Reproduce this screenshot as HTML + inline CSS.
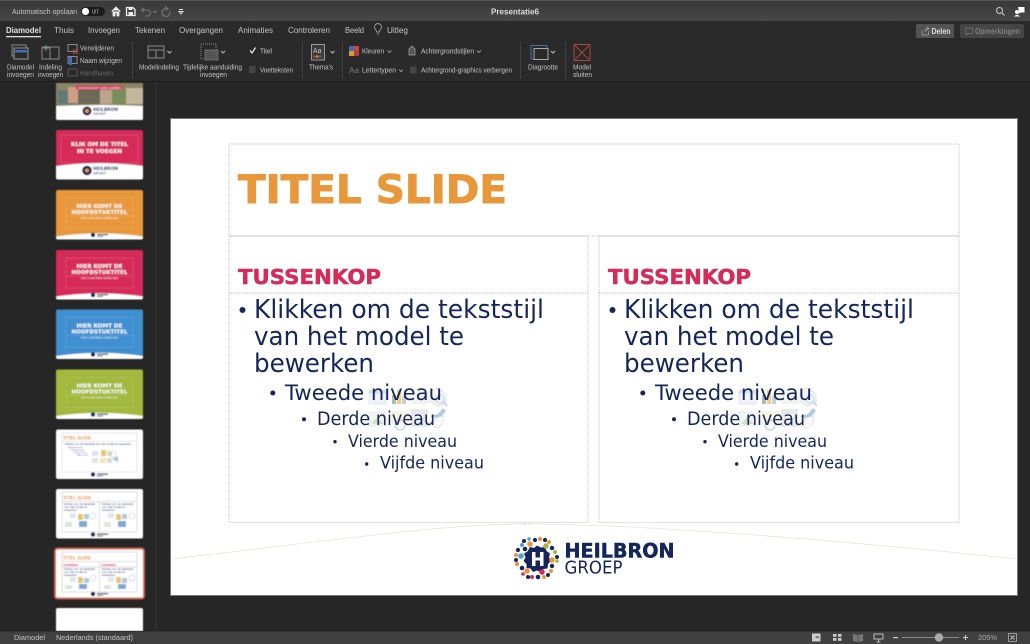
<!DOCTYPE html>
<html lang="nl"><head><meta charset="utf-8"><title>Presentatie6</title>
<style>
html,body{margin:0;padding:0;width:1030px;height:644px;overflow:hidden;background:#262626}
svg{display:block}
.u{font-family:"Liberation Sans",sans-serif;font-size:7px;fill:#c4c4c4}
.s{font-family:"DejaVu Sans",sans-serif}
.b{fill:#12275c;font-family:"DejaVu Sans",sans-serif}
.w{font-family:"DejaVu Sans",sans-serif;font-weight:bold;fill:#fff}
.ph{fill:none;stroke:#b4b4b4;stroke-width:.8;stroke-dasharray:1 1}
.tp{fill:none;stroke:#fff;stroke-opacity:.3;stroke-width:.4}
.ic{fill:none;stroke:#8a8a8a;stroke-width:1}
.bu{filter:url(#bl)}
.bt{filter:url(#bt)}
</style></head><body>
<svg width="1030" height="644" viewBox="0 0 1030 644" xmlns="http://www.w3.org/2000/svg">
<defs>
<linearGradient id="tb" x1="0" y1="0" x2="0" y2="1"><stop offset="0" stop-color="#393939"/><stop offset="1" stop-color="#474747"/></linearGradient>
<filter id="bl" x="-5%" y="-5%" width="110%" height="110%"><feGaussianBlur stdDeviation=".35"/></filter>
<filter id="bt" x="-5%" y="-5%" width="110%" height="110%"><feGaussianBlur stdDeviation=".55"/></filter>
</defs>
<rect width="1030" height="644" fill="#262626"/>

<g class="bu">
<!-- title bar -->
<rect width="1030" height="21" fill="url(#tb)"/>
<rect width="1030" height="1" fill="#555"/>
<text class="u" x="12" y="14" textLength="65" lengthAdjust="spacingAndGlyphs">Automatisch opslaan</text>
<rect x="81" y="7" width="24" height="9" rx="4.500" fill="#1d1d1d"/><circle cx="85.500" cy="11.500" r="3.600" fill="#fff"/>
<text class="u" x="92" y="13.600" style="font-size:5px" textLength="7" lengthAdjust="spacingAndGlyphs">UIT</text>
<path d="M111.500 11.500L116 7L120.500 11.500M113 10.500V16H115V12.800H117V16H119V10.500" fill="#eee" stroke="#eee" stroke-width=".8"/>
<path d="M126.500 7.500H133L135 9.500V15.500H126.500Z" fill="none" stroke="#eee" stroke-width="1.300"/><rect x="128.500" y="7.500" width="4" height="2.500" fill="#eee"/><rect x="128.500" y="12" width="4.500" height="3.500" fill="#eee"/>
<path d="M142 10H147.500A3 3 0 0 1 147.500 16H145M144 8L141.500 10L144 12" fill="none" stroke="#777" stroke-width="1"/>
<path d="M153.500 11L155 12.500L156.500 11" fill="none" stroke="#777"/>
<path d="M167 8.500A4 4 0 1 0 170 11.500M165 6.500L168 8.500L165.500 10.500" fill="none" stroke="#777"/>
<path d="M179 9.500H183M179 11.500L181 14L183 11.500Z" fill="none" stroke="#ddd"/>
<text class="u" x="491" y="14.500" style="font-size:8px;font-weight:bold;fill:#ddd" textLength="48" lengthAdjust="spacingAndGlyphs">Presentatie6</text>
<circle cx="999.500" cy="10.500" r="3" fill="none" stroke="#ccc"/><path d="M1002 13L1004.500 15.500" stroke="#ccc" stroke-width="1.100"/>
<path d="M1018 7H1024.500V12.500H1021L1019.500 13.500Z" fill="#fff"/><circle cx="1017" cy="12" r="2" fill="#fff"/><path d="M1014 16.500Q1017 13 1020 16.500Z" fill="#fff"/>

<!-- ribbon -->
<rect y="21" width="1030" height="60" fill="#2b2b2b"/>
<rect y="81" width="1030" height="1" fill="#1b1b1b"/>
<rect x="6" y="36" width="35" height="1.300" fill="#ddd"/>
<text class="u" x="6" y="33" style="font-size:8px;fill:#e0e0e0;font-weight:bold" textLength="35" lengthAdjust="spacingAndGlyphs">Diamodel</text>
<text class="u" x="54" y="33" style="font-size:8px" textLength="20" lengthAdjust="spacingAndGlyphs">Thuis</text>
<text class="u" x="88" y="33" style="font-size:8px" textLength="32" lengthAdjust="spacingAndGlyphs">Invoegen</text>
<text class="u" x="135" y="33" style="font-size:8px" textLength="30" lengthAdjust="spacingAndGlyphs">Tekenen</text>
<text class="u" x="179" y="33" style="font-size:8px" textLength="44" lengthAdjust="spacingAndGlyphs">Overgangen</text>
<text class="u" x="238" y="33" style="font-size:8px" textLength="35" lengthAdjust="spacingAndGlyphs">Animaties</text>
<text class="u" x="288" y="33" style="font-size:8px" textLength="42" lengthAdjust="spacingAndGlyphs">Controleren</text>
<text class="u" x="345" y="33" style="font-size:8px" textLength="19" lengthAdjust="spacingAndGlyphs">Beeld</text>
<text class="u" x="387" y="33" style="font-size:8px" textLength="21" lengthAdjust="spacingAndGlyphs">Uitleg</text>
<path d="M376.500 32Q376.500 30.500 375.500 29.500A3.500 3.500 0 1 1 380.500 29.500Q379.500 30.500 379.500 32ZM376.800 34H379.200" fill="none" stroke="#aaa" stroke-width=".8"/>

<!-- ribbon icons -->
<rect x="12" y="45" width="14" height="11" class="ic"/><rect x="14" y="48" width="14" height="11" fill="#2b2b2b" stroke="#999"/><rect x="15" y="50" width="12" height="2.500" fill="#3f6fb8"/>
<rect x="42" y="47" width="17" height="12" class="ic"/><path d="M50 47V59" class="ic"/><path d="M46 45V51M43 48H49" stroke="#6fae7d" fill="none"/>
<rect x="68" y="44.500" width="9" height="7" class="ic"/><path d="M73 49L78 54M78 49L73 54" stroke="#c44" fill="none"/>
<rect x="68" y="56.500" width="9" height="7" class="ic"/><rect x="69" y="57" width="3" height="8" fill="#3f6fb8"/>
<rect x="68" y="69" width="9" height="7" fill="none" stroke="#555"/>
<text class="u" x="80" y="50.300" textLength="34" lengthAdjust="spacingAndGlyphs">Verwijderen</text>
<text class="u" x="80" y="63" textLength="42" lengthAdjust="spacingAndGlyphs">Naam wijzigen</text>
<text class="u" x="80" y="75.500" style="fill:#666" textLength="33" lengthAdjust="spacingAndGlyphs">Handhaven</text>
<text class="u" x="7" y="69.500" textLength="27" lengthAdjust="spacingAndGlyphs">Diamodel</text>
<text class="u" x="7" y="77" textLength="27" lengthAdjust="spacingAndGlyphs">invoegen</text>
<text class="u" x="39" y="69.500" textLength="23" lengthAdjust="spacingAndGlyphs">Indeling</text>
<text class="u" x="38" y="77" textLength="25" lengthAdjust="spacingAndGlyphs">invoegen</text>
<rect x="132" y="42" width=".8" height="37" fill="#444"/>
<rect x="148" y="46" width="16" height="12" class="ic" stroke-width="1.200"/><path d="M148 50H164M156 50V58" class="ic"/>
<path d="M167.500 51L169.500 53L171.500 51" fill="none" stroke="#bbb"/>
<text class="u" x="139" y="69.500" textLength="40" lengthAdjust="spacingAndGlyphs">Modelindeling</text>
<rect x="201" y="44" width="15" height="15" fill="none" stroke="#888" stroke-dasharray="1 1"/><rect x="205" y="50" width="13" height="10" fill="#555" stroke="#888" stroke-width=".6"/>
<path d="M221 51L223 53L225 51" fill="none" stroke="#bbb"/>
<text class="u" x="183" y="69.500" textLength="59" lengthAdjust="spacingAndGlyphs">Tijdelijke aanduiding</text>
<text class="u" x="200" y="77" textLength="27" lengthAdjust="spacingAndGlyphs">invoegen</text>
<path d="M250 50.500L252 53L255.500 47.500" fill="none" stroke="#eee" stroke-width="1.200"/>
<text class="u" x="260" y="53.500" textLength="12" lengthAdjust="spacingAndGlyphs">Titel</text>
<rect x="249" y="66" width="6.500" height="7" rx="1" fill="#444"/>
<text class="u" x="260" y="72.500" textLength="33" lengthAdjust="spacingAndGlyphs">Voetteksten</text>
<rect x="302" y="42" width=".8" height="37" fill="#444"/>
<rect x="311.500" y="44.500" width="13" height="15.500" fill="#3a3a3a" stroke="#999"/><text class="u" x="313" y="53">Aa</text><rect x="313" y="55.500" width="2.500" height="2" fill="#d33"/><rect x="316" y="55.500" width="2.500" height="2" fill="#dd9a33"/><rect x="319" y="55.500" width="2.500" height="2" fill="#46a"/>
<path d="M330.500 51L332.500 53L334.500 51" fill="none" stroke="#bbb"/>
<text class="u" x="309" y="69.500" textLength="24" lengthAdjust="spacingAndGlyphs">Thema's</text>
<rect x="342" y="42" width=".8" height="37" fill="#444"/>
<rect x="349" y="46" width="5" height="5" fill="#3f6fb8"/><rect x="354" y="46" width="5" height="5" fill="#c84a38"/><rect x="349" y="51" width="5" height="5" fill="#dd9a33"/><rect x="354" y="51" width="5" height="5" fill="#b23a48"/>
<text class="u" x="362" y="53.500" textLength="22" lengthAdjust="spacingAndGlyphs">Kleuren</text>
<path d="M387.500 50.500L389.500 52.500L391.500 50.500" fill="none" stroke="#aaa" stroke-width=".8"/>
<path d="M409 49L412 46L415 49V55H409Z" fill="#555" stroke="#aaa" stroke-width=".7"/>
<text class="u" x="421" y="53.500" textLength="53" lengthAdjust="spacingAndGlyphs">Achtergrondstijlen</text>
<path d="M477 50.500L479 52.500L481 50.500" fill="none" stroke="#aaa" stroke-width=".8"/>
<text class="u" x="349" y="73" style="font-size:8px;fill:#777" textLength="10" lengthAdjust="spacingAndGlyphs">Aa</text>
<text class="u" x="362" y="72.500" textLength="34" lengthAdjust="spacingAndGlyphs">Lettertypen</text>
<path d="M399 69.500L401 71.500L403 69.500" fill="none" stroke="#aaa" stroke-width=".8"/>
<rect x="410" y="66.500" width="6.500" height="7" rx="1" fill="#444"/>
<text class="u" x="421" y="72.500" textLength="91" lengthAdjust="spacingAndGlyphs">Achtergrond-graphics verbergen</text>
<rect x="520" y="42" width=".8" height="37" fill="#444"/>
<rect x="531" y="45.500" width="16" height="13.500" fill="none" stroke="#4a6fa8"/><rect x="534" y="48.500" width="14" height="11" fill="#2b2b2b" stroke="#aaa"/>
<path d="M551 51L553 53L555 51" fill="none" stroke="#bbb"/>
<text class="u" x="528" y="69.500" textLength="30" lengthAdjust="spacingAndGlyphs">Diagrootte</text>
<rect x="565" y="42" width=".8" height="37" fill="#444"/>
<rect x="574" y="44.500" width="16" height="16" fill="none" stroke="#a8463c"/><path d="M575 45.500L589 59.500M589 45.500L575 59.500" stroke="#a8463c" fill="none"/>
<text class="u" x="573" y="69.500" textLength="18" lengthAdjust="spacingAndGlyphs">Model</text>
<text class="u" x="573" y="77" textLength="19" lengthAdjust="spacingAndGlyphs">sluiten</text>

<!-- share buttons -->
<rect x="916" y="24" width="38" height="14" rx="1.500" fill="#535353"/>
<path d="M922 30.500V35H928.500V31M925 32Q925 28.500 928 28.500M926.500 26.500L929 28.500L926.500 30.500" fill="none" stroke="#aaa" stroke-width=".7"/>
<text class="u" x="931.500" y="34" style="font-weight:bold;fill:#ddd;font-size:8px" textLength="19" lengthAdjust="spacingAndGlyphs">Delen</text>
<rect x="960" y="24" width="64" height="14" rx="1.500" fill="#444"/>
<path d="M965.500 28H972.500V33.500H968L966.500 35V33.500H965.500Z" fill="none" stroke="#777" stroke-width=".7"/>
<text class="u" x="975" y="34" style="font-weight:bold;fill:#808080;font-size:8px" textLength="45" lengthAdjust="spacingAndGlyphs">Opmerkingen</text>
</g>

<!-- workspace -->
<rect x="155.500" y="82" width="1" height="549" fill="#373737"/>

<!-- thumbnails -->
<g class="bt">
<!-- 1 -->
<rect x="56" y="83" width="87" height="37" rx="2" fill="#fff"/>
<rect x="56" y="83" width="87" height="23" fill="#8a8464"/>
<rect x="58" y="90" width="16" height="14" fill="#5e7a78"/><rect x="68" y="87" width="10" height="16" fill="#cf9d80"/><rect x="78" y="86" width="22" height="18" fill="#6e6a55"/><rect x="100" y="90" width="12" height="14" fill="#b9a68e"/><rect x="112" y="86" width="14" height="18" fill="#7a8d5c"/><rect x="126" y="88" width="17" height="16" fill="#c2b69c"/>
<rect x="76" y="85.500" width="47" height="4" fill="#d62c58"/>
<text x="78" y="89" style="font-family:'DejaVu Sans',sans-serif;font-size:3px;fill:#fff" textLength="43" lengthAdjust="spacingAndGlyphs">KOEKRACHT VAN SAMEN</text>
<path d="M56 106Q100 104 143 106V118a2 2 0 0 1-2 2H58a2 2 0 0 1-2-2Z" fill="#fff"/>
<circle cx="87" cy="111" r="4.500" fill="#12275c"/><circle cx="87" cy="111" r="2" fill="#e8983a"/>
<text x="93" y="111" class="w" style="font-size:4.200px;fill:#12275c" textLength="25" lengthAdjust="spacingAndGlyphs">HEILBRON</text>
<text x="93" y="115" class="s" style="font-size:3.500px;fill:#12275c" textLength="13" lengthAdjust="spacingAndGlyphs">GROEP</text>

<!-- 2 -->
<rect x="56" y="130" width="87" height="49.500" rx="2" fill="#d62c58"/>
<path d="M56 166Q100 160 143 166V177.500a2 2 0 0 1-2 2H58a2 2 0 0 1-2-2Z" fill="#fff"/>
<rect x="61" y="135" width="77" height="28" class="tp"/>
<text x="71" y="146" class="w" style="font-size:5px" textLength="57" lengthAdjust="spacingAndGlyphs">KLIK OM DE TITEL</text>
<text x="77" y="153" class="w" style="font-size:5px" textLength="45" lengthAdjust="spacingAndGlyphs">IN TE VOEGEN</text>
<circle cx="87" cy="170.500" r="4.800" fill="#12275c"/><circle cx="87" cy="170.500" r="2" fill="#e8983a"/>
<text x="93" y="170" class="w" style="font-size:4.200px;fill:#12275c" textLength="25" lengthAdjust="spacingAndGlyphs">HEILBRON</text>
<text x="93" y="174.500" class="s" style="font-size:3.500px;fill:#12275c" textLength="13" lengthAdjust="spacingAndGlyphs">GROEP</text>

<!-- 3 -->
<rect x="56" y="190" width="87" height="49.500" rx="2" fill="#e8983a"/>
<rect x="66" y="198" width="67" height="30" class="tp"/><path d="M66 216H133" class="tp"/>
<text x="76.500" y="208" class="w" style="font-size:4.800px" textLength="46" lengthAdjust="spacingAndGlyphs">HIER KOMT DE</text>
<text x="71.500" y="214" class="w" style="font-size:4.800px" textLength="56" lengthAdjust="spacingAndGlyphs">HOOFDSTUKTITEL</text>
<text x="81" y="219" class="s" style="font-size:2.200px;fill:#fff" textLength="37" lengthAdjust="spacingAndGlyphs">Click to edit Master subtitle style</text>
<path d="M56 236.500Q100 230 143 236.500V237.500a2 2 0 0 1-2 2H58a2 2 0 0 1-2-2Z" fill="#fff"/><circle cx="93" cy="235" r="2.200" fill="#12275c"/><rect x="97" y="234" width="11" height="1.200" fill="#12275c"/><rect x="97" y="236" width="6" height=".8" fill="#12275c"/>

<!-- 4 -->
<rect x="56" y="250" width="87" height="49.500" rx="2" fill="#d62c58"/>
<rect x="66" y="258" width="67" height="30" class="tp"/><path d="M66 276H133" class="tp"/>
<text x="76.500" y="268" class="w" style="font-size:4.800px" textLength="46" lengthAdjust="spacingAndGlyphs">HIER KOMT DE</text>
<text x="71.500" y="274" class="w" style="font-size:4.800px" textLength="56" lengthAdjust="spacingAndGlyphs">HOOFDSTUKTITEL</text>
<text x="81" y="279" class="s" style="font-size:2.200px;fill:#fff" textLength="37" lengthAdjust="spacingAndGlyphs">Click to edit Master subtitle style</text>
<path d="M56 296.500Q100 290 143 296.500V297.500a2 2 0 0 1-2 2H58a2 2 0 0 1-2-2Z" fill="#fff"/><circle cx="93" cy="295" r="2.200" fill="#12275c"/><rect x="97" y="294" width="11" height="1.200" fill="#12275c"/><rect x="97" y="296" width="6" height=".8" fill="#12275c"/>

<!-- 5 -->
<rect x="56" y="309.500" width="87" height="49.500" rx="2" fill="#3f8fd0"/>
<rect x="66" y="317.500" width="67" height="30" class="tp"/><path d="M66 335.500H133" class="tp"/>
<text x="76.500" y="327.500" class="w" style="font-size:4.800px" textLength="46" lengthAdjust="spacingAndGlyphs">HIER KOMT DE</text>
<text x="71.500" y="333.500" class="w" style="font-size:4.800px" textLength="56" lengthAdjust="spacingAndGlyphs">HOOFDSTUKTITEL</text>
<text x="81" y="338.500" class="s" style="font-size:2.200px;fill:#fff" textLength="37" lengthAdjust="spacingAndGlyphs">Click to edit Master subtitle style</text>
<path d="M56 356Q100 349.500 143 356V357a2 2 0 0 1-2 2H58a2 2 0 0 1-2-2Z" fill="#fff"/><circle cx="93" cy="354.500" r="2.200" fill="#12275c"/><rect x="97" y="353.500" width="11" height="1.200" fill="#12275c"/><rect x="97" y="355.500" width="6" height=".8" fill="#12275c"/>

<!-- 6 -->
<rect x="56" y="369.500" width="87" height="49.500" rx="2" fill="#a3b83c"/>
<rect x="66" y="377.500" width="67" height="30" class="tp"/><path d="M66 395.500H133" class="tp"/>
<text x="76.500" y="387.500" class="w" style="font-size:4.800px" textLength="46" lengthAdjust="spacingAndGlyphs">HIER KOMT DE</text>
<text x="71.500" y="393.500" class="w" style="font-size:4.800px" textLength="56" lengthAdjust="spacingAndGlyphs">HOOFDSTUKTITEL</text>
<text x="81" y="398.500" class="s" style="font-size:2.200px;fill:#fff" textLength="37" lengthAdjust="spacingAndGlyphs">Click to edit Master subtitle style</text>
<path d="M56 416Q100 409.500 143 416V417a2 2 0 0 1-2 2H58a2 2 0 0 1-2-2Z" fill="#fff"/><circle cx="93" cy="414.500" r="2.200" fill="#12275c"/><rect x="97" y="413.500" width="11" height="1.200" fill="#12275c"/><rect x="97" y="415.500" width="6" height=".8" fill="#12275c"/>

<!-- 7 -->
<rect x="56" y="429.500" width="87" height="49.500" rx="2" fill="#fff"/>
<rect x="62" y="433" width="75" height="39" fill="none" stroke="#ccc" stroke-width=".5"/><path d="M62 441.500H137" stroke="#ccc" stroke-width=".5"/>
<text x="63" y="439.500" class="w" style="font-size:4.200px;fill:#e8983a" textLength="28" lengthAdjust="spacingAndGlyphs">TITEL SLIDE</text>
<text x="65" y="445" class="s" style="font-size:2.200px;fill:#12275c" textLength="66" lengthAdjust="spacingAndGlyphs">Klikken om de tekststijl van het model te bewerken</text>
<text x="68" y="448" class="s" style="font-size:2px;fill:#12275c" textLength="15" lengthAdjust="spacingAndGlyphs">Tweede niveau</text>
<text x="71" y="450.500" class="s" style="font-size:2px;fill:#12275c" textLength="13" lengthAdjust="spacingAndGlyphs">Derde niveau</text>
<text x="74" y="453" class="s" style="font-size:1.800px;fill:#12275c" textLength="12" lengthAdjust="spacingAndGlyphs">Vierde niveau</text>
<text x="77" y="455.500" class="s" style="font-size:1.800px;fill:#12275c" textLength="11" lengthAdjust="spacingAndGlyphs">Vijfde niveau</text>
<rect x="92" y="451" width="6" height="5" fill="#d8e4ee"/><rect x="101" y="450" width="5" height="6" fill="#e8c470"/><rect x="107" y="451" width="5" height="5" fill="#cfe0c0"/><circle cx="113" cy="454" r="3" fill="none" stroke="#bcc8d4" stroke-width=".6"/>
<rect x="92" y="458" width="6" height="5" fill="#dfe6d8"/><rect x="100" y="458" width="6" height="5" fill="#f2e4bd"/><rect x="107" y="458" width="5" height="5" fill="#d8d8d8"/><path d="M112 459L118 456V462Z" fill="#a7c0dc"/>
<circle cx="93" cy="474.500" r="2.200" fill="#12275c"/><rect x="97" y="473.500" width="11" height="1.200" fill="#12275c"/><rect x="97" y="475.500" width="6" height=".8" fill="#12275c"/>

<!-- 8 -->
<rect x="56" y="489" width="87" height="49.500" rx="2" fill="#fff"/>
<rect x="62" y="492" width="75" height="40" fill="none" stroke="#bbb" stroke-width=".5"/><path d="M62 501.500H137M99.500 501.500V532" stroke="#bbb" stroke-width=".5"/>
<text x="63" y="499.500" class="w" style="font-size:4.200px;fill:#e8983a" textLength="28" lengthAdjust="spacingAndGlyphs">TITEL SLIDE</text>
<g class="s" style="font-size:2.200px;fill:#12275c">
<text x="64" y="505" textLength="31" lengthAdjust="spacingAndGlyphs">Klikken om de tekststijl</text><text x="64" y="508" textLength="23" lengthAdjust="spacingAndGlyphs">van het model te</text><text x="64" y="511" textLength="13" lengthAdjust="spacingAndGlyphs">bewerken</text>
<text x="102" y="505" textLength="31" lengthAdjust="spacingAndGlyphs">Klikken om de tekststijl</text><text x="102" y="508" textLength="23" lengthAdjust="spacingAndGlyphs">van het model te</text><text x="102" y="511" textLength="13" lengthAdjust="spacingAndGlyphs">bewerken</text>
</g>
<rect x="70" y="513" width="6" height="5" fill="#dfe6ee"/><rect x="78" y="514" width="5" height="6" fill="#e8c470"/><rect x="84" y="514" width="5" height="5" fill="#aec8e0"/><circle cx="93" cy="516" r="3" fill="none" stroke="#bcc8d4" stroke-width=".6"/><rect x="65" y="522" width="7" height="5" fill="#dfe6d8"/><rect x="79" y="521" width="8" height="6" fill="#7fa8d0"/>
<rect x="108" y="513" width="6" height="5" fill="#dfe6ee"/><rect x="116" y="514" width="5" height="6" fill="#e8c470"/><rect x="122" y="514" width="5" height="5" fill="#aec8e0"/><circle cx="132" cy="516" r="3" fill="none" stroke="#bcc8d4" stroke-width=".6"/><rect x="104" y="522" width="7" height="5" fill="#dfe6d8"/><rect x="118" y="521" width="8" height="6" fill="#7fa8d0"/>
<circle cx="93" cy="534.500" r="2.200" fill="#12275c"/><rect x="97" y="533.500" width="11" height="1.200" fill="#12275c"/><rect x="97" y="535.500" width="6" height=".8" fill="#12275c"/>

<!-- 9 selected -->
<rect x="55" y="548.500" width="89" height="50" rx="2.500" fill="#fff" stroke="#d0624a" stroke-width="2"/>
<rect x="62" y="552" width="75" height="40" fill="none" stroke="#bbb" stroke-width=".5"/><path d="M62 561.500H137M99.500 561.500V592M62 567H137" stroke="#bbb" stroke-width=".5"/>
<text x="63" y="559.500" class="w" style="font-size:4.200px;fill:#e8983a" textLength="28" lengthAdjust="spacingAndGlyphs">TITEL SLIDE</text>
<text x="63" y="566" class="w" style="font-size:2.400px;fill:#d62c58" textLength="15" lengthAdjust="spacingAndGlyphs">TUSSENKOP</text>
<text x="101" y="566" class="w" style="font-size:2.400px;fill:#d62c58" textLength="15" lengthAdjust="spacingAndGlyphs">TUSSENKOP</text>
<g class="s" style="font-size:2.200px;fill:#12275c">
<text x="64" y="570" textLength="31" lengthAdjust="spacingAndGlyphs">Klikken om de tekststijl</text><text x="64" y="573" textLength="23" lengthAdjust="spacingAndGlyphs">van het model te</text><text x="64" y="576" textLength="13" lengthAdjust="spacingAndGlyphs">bewerken</text>
<text x="102" y="570" textLength="31" lengthAdjust="spacingAndGlyphs">Klikken om de tekststijl</text><text x="102" y="573" textLength="23" lengthAdjust="spacingAndGlyphs">van het model te</text><text x="102" y="576" textLength="13" lengthAdjust="spacingAndGlyphs">bewerken</text>
</g>
<rect x="70" y="577" width="6" height="5" fill="#dfe6ee"/><rect x="78" y="577" width="5" height="6" fill="#e8c470"/><rect x="84" y="578" width="5" height="5" fill="#aec8e0"/><circle cx="93" cy="578" r="3" fill="none" stroke="#bcc8d4" stroke-width=".6"/><rect x="65" y="585" width="7" height="4" fill="#dfe6d8"/><rect x="79" y="584" width="8" height="5" fill="#7fa8d0"/>
<rect x="108" y="577" width="6" height="5" fill="#dfe6ee"/><rect x="116" y="577" width="5" height="6" fill="#e8c470"/><rect x="122" y="578" width="5" height="5" fill="#aec8e0"/><circle cx="132" cy="578" r="3" fill="none" stroke="#bcc8d4" stroke-width=".6"/><rect x="104" y="585" width="7" height="4" fill="#dfe6d8"/><rect x="118" y="584" width="8" height="5" fill="#7fa8d0"/>
<circle cx="93" cy="594" r="2.200" fill="#12275c"/><rect x="97" y="593" width="11" height="1.200" fill="#12275c"/><rect x="97" y="595" width="6" height=".8" fill="#12275c"/>

<!-- 10 -->
<path d="M56 610a2 2 0 0 1 2-2H141a2 2 0 0 1 2 2V631H56Z" fill="#fff"/>
</g>

<!-- main slide -->
<rect x="170.500" y="118.500" width="847" height="477" fill="#fff" stroke="#777" stroke-width="1"/>
<g class="bu">
<rect class="ph" x="229" y="144" width="730" height="92"/>
<rect class="ph" x="229" y="236" width="359" height="57"/>
<rect class="ph" x="229" y="293" width="359" height="229.500"/>
<rect class="ph" x="599" y="236" width="360" height="57"/>
<rect class="ph" x="599" y="293" width="360" height="229.500"/>
<path d="M171 559C330 541 440 524 527 524C620 524 800 536 1017 559" fill="none" stroke="#e6e4da" stroke-width=".8"/>
<path d="M524.500 522V525M529.500 522V525" stroke="#ccc" stroke-width=".6"/>

<text x="238" y="203" class="s" style="font-size:39px;font-weight:bold;fill:#e8983a;stroke:#e8983a;stroke-width:.9" textLength="269" lengthAdjust="spacingAndGlyphs">TITEL SLIDE</text>

<g opacity=".8">
<rect x="369" y="390" width="17" height="14" fill="#eef1f4" stroke="#d6dde4" stroke-width=".8"/><path d="M369 394H386M375 390V404M380 390V404" stroke="#d6dde4" stroke-width=".6"/><rect x="369" y="390" width="17" height="3" fill="#c4d6e8"/>
<rect x="392" y="395" width="4" height="9" fill="#9aa8b0"/><rect x="397" y="390" width="4" height="14" fill="#eec268"/><rect x="402" y="396" width="4" height="8" fill="#b8c4cc"/>
<path d="M412 392Q420 386 428 391V403H412Z" fill="#f0f3ee" stroke="#d8e4d0" stroke-width=".7"/>
<path d="M430 392L438 388L446 394V403L438 406L430 401Z" fill="#f6f6f6" stroke="#d4d4d4" stroke-width=".8"/>
<circle cx="440" cy="399" r="4" fill="none" stroke="#b8cfe4" stroke-width="1.200"/><path d="M443 402L447 406" stroke="#a8c4e0" stroke-width="1.400"/>
<rect x="369" y="412" width="17" height="14" fill="#f1f3ee" stroke="#dde1d8" stroke-width=".7"/><path d="M371 424L377 417L384 424Z" fill="#c8d8bc"/>
<rect x="392" y="412" width="17" height="12" fill="#fcf4dc" stroke="#efe4c0" stroke-width=".7"/><circle cx="400" cy="425" r="5" fill="none" stroke="#a8c8e4" stroke-width="1.200"/>
<rect x="412" y="410" width="15" height="16" fill="#eaeaea" stroke="#c4c4c4" stroke-width=".8"/><rect x="415" y="413" width="9" height="6" fill="#fff" stroke="#b8b8b8" stroke-width=".6"/>
<path d="M430 416L438 414L443 408L446 411L441 417L434 418Z" fill="#9fbcdc"/><path d="M433 426Q432 418 443 416Q445 425 437 428Z" fill="#f8f8f8" stroke="#d8d8d8" stroke-width=".8"/>
</g>
<g transform="translate(370,0)" opacity=".8">
<rect x="369" y="390" width="17" height="14" fill="#eef1f4" stroke="#d6dde4" stroke-width=".8"/><path d="M369 394H386M375 390V404M380 390V404" stroke="#d6dde4" stroke-width=".6"/><rect x="369" y="390" width="17" height="3" fill="#c4d6e8"/>
<rect x="392" y="395" width="4" height="9" fill="#9aa8b0"/><rect x="397" y="390" width="4" height="14" fill="#eec268"/><rect x="402" y="396" width="4" height="8" fill="#b8c4cc"/>
<path d="M412 392Q420 386 428 391V403H412Z" fill="#f0f3ee" stroke="#d8e4d0" stroke-width=".7"/>
<path d="M430 392L438 388L446 394V403L438 406L430 401Z" fill="#f6f6f6" stroke="#d4d4d4" stroke-width=".8"/>
<circle cx="440" cy="399" r="4" fill="none" stroke="#b8cfe4" stroke-width="1.200"/><path d="M443 402L447 406" stroke="#a8c4e0" stroke-width="1.400"/>
<rect x="369" y="412" width="17" height="14" fill="#f1f3ee" stroke="#dde1d8" stroke-width=".7"/><path d="M371 424L377 417L384 424Z" fill="#c8d8bc"/>
<rect x="392" y="412" width="17" height="12" fill="#fcf4dc" stroke="#efe4c0" stroke-width=".7"/><circle cx="400" cy="425" r="5" fill="none" stroke="#a8c8e4" stroke-width="1.200"/>
<rect x="412" y="410" width="15" height="16" fill="#eaeaea" stroke="#c4c4c4" stroke-width=".8"/><rect x="415" y="413" width="9" height="6" fill="#fff" stroke="#b8b8b8" stroke-width=".6"/>
<path d="M430 416L438 414L443 408L446 411L441 417L434 418Z" fill="#9fbcdc"/><path d="M433 426Q432 418 443 416Q445 425 437 428Z" fill="#f8f8f8" stroke="#d8d8d8" stroke-width=".8"/>
</g>

<!-- left column -->
<text x="238" y="284" class="s" style="font-size:20.500px;font-weight:bold;fill:#d62c58;stroke:#d62c58;stroke-width:.5" textLength="143" lengthAdjust="spacingAndGlyphs">TUSSENKOP</text>
<circle cx="242.500" cy="310" r="3" fill="#12275c"/>
<text x="254" y="318" class="b" style="font-size:26px" textLength="290" lengthAdjust="spacingAndGlyphs">Klikken om de tekststijl</text>
<text x="254" y="345" class="b" style="font-size:26px" textLength="210" lengthAdjust="spacingAndGlyphs">van het model te</text>
<text x="254" y="372" class="b" style="font-size:26px" textLength="120" lengthAdjust="spacingAndGlyphs">bewerken</text>
<circle cx="272.800" cy="393" r="2.500" fill="#12275c"/>
<text x="285" y="400" class="b" style="font-size:21.500px" textLength="157" lengthAdjust="spacingAndGlyphs">Tweede niveau</text>
<circle cx="304" cy="419.300" r="2" fill="#12275c"/>
<text x="317" y="425" class="b" style="font-size:18.500px" textLength="118" lengthAdjust="spacingAndGlyphs">Derde niveau</text>
<circle cx="335" cy="441.700" r="1.700" fill="#12275c"/>
<text x="348" y="447" class="b" style="font-size:16.500px" textLength="109" lengthAdjust="spacingAndGlyphs">Vierde niveau</text>
<circle cx="366.700" cy="464" r="1.700" fill="#12275c"/>
<text x="380" y="468.500" class="b" style="font-size:16.500px" textLength="104" lengthAdjust="spacingAndGlyphs">Vijfde niveau</text>

<!-- right column -->
<text x="608" y="284" class="s" style="font-size:20.500px;font-weight:bold;fill:#d62c58;stroke:#d62c58;stroke-width:.5" textLength="143" lengthAdjust="spacingAndGlyphs">TUSSENKOP</text>
<circle cx="612.500" cy="310" r="3" fill="#12275c"/>
<text x="624" y="318" class="b" style="font-size:26px" textLength="290" lengthAdjust="spacingAndGlyphs">Klikken om de tekststijl</text>
<text x="624" y="345" class="b" style="font-size:26px" textLength="210" lengthAdjust="spacingAndGlyphs">van het model te</text>
<text x="624" y="372" class="b" style="font-size:26px" textLength="120" lengthAdjust="spacingAndGlyphs">bewerken</text>
<circle cx="642.800" cy="393" r="2.500" fill="#12275c"/>
<text x="655" y="400" class="b" style="font-size:21.500px" textLength="157" lengthAdjust="spacingAndGlyphs">Tweede niveau</text>
<circle cx="674" cy="419.300" r="2" fill="#12275c"/>
<text x="687" y="425" class="b" style="font-size:18.500px" textLength="118" lengthAdjust="spacingAndGlyphs">Derde niveau</text>
<circle cx="705" cy="441.700" r="1.700" fill="#12275c"/>
<text x="718" y="447" class="b" style="font-size:16.500px" textLength="109" lengthAdjust="spacingAndGlyphs">Vierde niveau</text>
<circle cx="736.700" cy="464" r="1.700" fill="#12275c"/>
<text x="750" y="468.500" class="b" style="font-size:16.500px" textLength="104" lengthAdjust="spacingAndGlyphs">Vijfde niveau</text>

<!-- logo -->
<path d="M530 547L534 548L537 545.500L541 547.500L545 547L546.500 551L550 553.500L549 557.500L551 561L548 564L547.500 568.500L543.500 569L541 572L537 570.500L533 572L530.500 568.500L526.500 568L526.500 564L523.500 561L525.500 557.500L524 553.500L527.500 551.500Z" fill="#12275c"/>
<path d="M532 552H535.500V557.500H540V552H543.500V566H540V560.500H535.500V566H532Z" fill="#fff"/>
<g fill="#12275c">
<circle cx="524" cy="541" r="2"/><circle cx="535" cy="540" r="2.100"/><circle cx="545" cy="540" r="2.100"/><circle cx="518" cy="550" r="2.100"/><circle cx="525" cy="549" r="2.300"/><circle cx="516" cy="560" r="2"/><circle cx="522" cy="568" r="2.300"/><circle cx="528" cy="577" r="2"/><circle cx="538" cy="577" r="2.300"/><circle cx="548" cy="575" r="2"/><circle cx="552" cy="566" r="2.200"/><circle cx="557" cy="557" r="2"/><circle cx="552" cy="548" r="2.200"/>
</g>
<g fill="#e8983a"><circle cx="530" cy="544" r="2.800"/><circle cx="540" cy="539" r="2.200"/><circle cx="549" cy="542" r="2"/><circle cx="552" cy="560" r="2.800"/><circle cx="527" cy="571" r="2.800"/><circle cx="516" cy="555" r="2"/><circle cx="517" cy="564" r="2.200"/><circle cx="544" cy="577" r="2"/><circle cx="551" cy="571" r="2"/></g>
<g fill="#4a9fd8"><circle cx="521" cy="556" r="2.800"/><circle cx="522" cy="545" r="2"/><circle cx="529" cy="539" r="1.800"/></g>
<g fill="#a3b83c"><circle cx="546" cy="546" r="2.800"/><circle cx="555" cy="552" r="2"/><circle cx="557" cy="561" r="1.800"/></g>
<g fill="#d62c58"><circle cx="542" cy="572" r="2.800"/><circle cx="523" cy="574" r="1.800"/><circle cx="532" cy="577" r="2"/></g>
<text x="564.500" y="557.500" class="w" style="font-size:19.500px;fill:#12275c;stroke:#12275c;stroke-width:.5" textLength="110" lengthAdjust="spacingAndGlyphs">HEILBRON</text>
<text x="564.500" y="573.500" class="s" style="font-size:17.500px;fill:#12275c" textLength="58" lengthAdjust="spacingAndGlyphs">GROEP</text>
</g>

<!-- status bar -->
<g class="bu">
<rect y="631" width="1030" height="13" fill="#414141"/>
<rect y="631" width="1030" height="1" fill="#333"/>
<text class="u" x="14" y="640" style="font-size:7.500px" textLength="31" lengthAdjust="spacingAndGlyphs">Diamodel</text>
<text class="u" x="56" y="640" style="font-size:7.500px" textLength="77" lengthAdjust="spacingAndGlyphs">Nederlands (standaard)</text>
<rect x="812" y="633.500" width="8.500" height="8" fill="#ccc"/><rect x="815.500" y="636.500" width="3.500" height="1.200" fill="#444"/>
<g fill="#ccc"><rect x="833" y="634" width="3.500" height="2.800"/><rect x="838" y="634" width="3.500" height="2.800"/><rect x="833" y="638" width="3.500" height="2.800"/><rect x="838" y="638" width="3.500" height="2.800"/></g>
<path d="M853 634L858 635L863 634V641L858 642L853 641Z" fill="#777"/><path d="M858 635V642" stroke="#444" stroke-width=".6"/>
<path d="M874 634H883V639H874ZM878.500 639V642M876.500 642H880.500" fill="none" stroke="#bbb"/>
<rect x="893" y="637" width="5" height="1.200" fill="#ccc"/>
<rect x="902" y="637" width="57" height="1" fill="#888"/>
<circle cx="939" cy="637.500" r="4.200" fill="#aaa"/>
<path d="M963 637.500H968M965.500 635V640" stroke="#ccc" fill="none" stroke-width="1.100"/>
<text class="u" x="978" y="640" style="font-size:7.500px;fill:#aaa" textLength="19" lengthAdjust="spacingAndGlyphs">205%</text>
<rect x="1008.500" y="633.500" width="8" height="8" fill="none" stroke="#999"/><path d="M1010.500 635.500L1014.500 639.500M1014.500 635.500L1010.500 639.500" stroke="#bbb" fill="none"/>
</g>
</svg>
</body></html>
